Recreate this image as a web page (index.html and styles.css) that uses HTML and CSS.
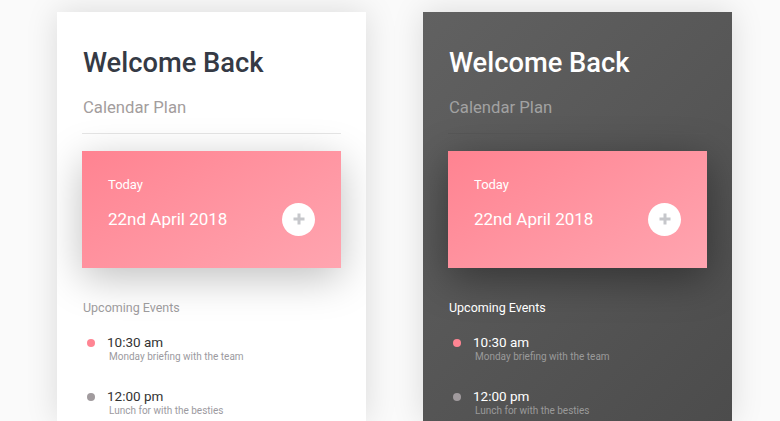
FILE: index.html
```html
<!DOCTYPE html>
<html lang="en">
<head>
<meta charset="utf-8">
<title>Calendar Plan</title>
<link rel="stylesheet" href="styles.css">
</head>
<body>
<div class="page">
  <section class="card light">
    <h1 class="title">Welcome Back</h1>
    <p class="subtitle">Calendar Plan</p>
    <hr class="divider">
    <div class="today">
      <div class="today-label">Today</div>
      <div class="today-row">
        <span class="today-date">22nd April 2018</span>
        <span class="add-btn"><svg width="12" height="12" viewBox="0 0 12 12"><path d="M6 0.5V11.5M0.5 6H11.5" stroke="#c6c7cb" stroke-width="3"/></svg></span>
      </div>
    </div>
    <h2 class="section-title">Upcoming Events</h2>
    <ul class="events">
      <li class="event">
        <div class="event-head"><span class="dot pink"></span><span class="event-time">10:30 am</span></div>
        <div class="event-desc">Monday briefing with the team</div>
      </li>
      <li class="event">
        <div class="event-head"><span class="dot grey"></span><span class="event-time">12:00 pm</span></div>
        <div class="event-desc">Lunch for with the besties</div>
      </li>
    </ul>
  </section>
  <section class="card dark">
    <h1 class="title">Welcome Back</h1>
    <p class="subtitle">Calendar Plan</p>
    <hr class="divider">
    <div class="today">
      <div class="today-label">Today</div>
      <div class="today-row">
        <span class="today-date">22nd April 2018</span>
        <span class="add-btn"><svg width="12" height="12" viewBox="0 0 12 12"><path d="M6 0.5V11.5M0.5 6H11.5" stroke="#c6c7cb" stroke-width="3"/></svg></span>
      </div>
    </div>
    <h2 class="section-title">Upcoming Events</h2>
    <ul class="events">
      <li class="event">
        <div class="event-head"><span class="dot pink"></span><span class="event-time">10:30 am</span></div>
        <div class="event-desc">Monday briefing with the team</div>
      </li>
      <li class="event">
        <div class="event-head"><span class="dot grey"></span><span class="event-time">12:00 pm</span></div>
        <div class="event-desc">Lunch for with the besties</div>
      </li>
    </ul>
  </section>
</div>
</body>
</html>
```
FILE: styles.css
```css
html, body {
  margin: 0;
  padding: 0;
}
body {
  background: #fafafa;
  font-family: Roboto, "Liberation Sans", sans-serif;
  width: 780px;
  height: 421px;
  overflow: hidden;
}
.page {
  display: flex;
  gap: 57px;
  padding: 12px 0 0 57px;
}
.card {
  width: 309px;
  height: 409px;
  box-sizing: border-box;
  padding: 35px 25px 0 26px;
  box-shadow: 0 0 30px rgba(0, 0, 0, 0.13);
  flex: none;
  overflow: hidden;
}
.light {
  background: #ffffff;
}
.dark {
  background: linear-gradient(135deg, #616161 0%, #4c4c4c 100%);
}
.title {
  margin: 0;
  font-size: 27.3px;
  line-height: 32px;
  font-weight: 500;
  color: #353a45;
}
.dark .title { color: #ffffff; }
.subtitle {
  margin: 19px 0 0;
  font-size: 16.7px;
  line-height: 20px;
  color: #a39d9d;
}
.dark .subtitle { color: #a2a2a2; }
.divider {
  margin: 15px 0 0 -1px;
  border: 0;
  height: 1px;
  background: #e6e6e6;
}
.dark .divider { background: #575757; }
.today {
  margin: 17px 0 0 -1px;
  height: 117px;
  box-sizing: border-box;
  padding: 26px 26px 0 26px;
  background: linear-gradient(150deg, #ff8391 0%, #ffa5b0 100%);
  box-shadow: 0 10px 40px rgba(0, 0, 0, 0.25);
  color: #ffffff;
}
.dark .today {
  box-shadow: 0 10px 40px rgba(0, 0, 0, 0.4);
}
.today-label {
  font-size: 13px;
  line-height: 16px;
}
.today-row {
  margin-top: 16px;
  display: flex;
  align-items: center;
  justify-content: space-between;
  height: 20px;
}
.today-date {
  font-size: 17px;
  line-height: 20px;
}
.add-btn {
  width: 33px;
  height: 33px;
  border-radius: 50%;
  background: #ffffff;
  display: flex;
  align-items: center;
  justify-content: center;
}
.section-title {
  margin: 32px 0 0;
  font-size: 12.5px;
  line-height: 15px;
  font-weight: 400;
  color: #9c9a9c;
}
.dark .section-title { color: #ffffff; }
.events {
  list-style: none;
  margin: 20px 0 0;
  padding: 0;
  display: flex;
  flex-direction: column;
  gap: 27px;
}
.event-head {
  display: flex;
  align-items: center;
  gap: 12px;
}
.dot {
  width: 8px;
  height: 8px;
  border-radius: 50%;
  margin-left: 4px;
}
.dot.pink { background: #ff8593; }
.dot.grey { background: #a19b9e; }
.event-time {
  font-size: 13.5px;
  line-height: 15px;
  color: #333333;
}
.dark .event-time { color: #ffffff; }
.event-desc {
  margin: 1px 0 0 26px;
  font-size: 10px;
  line-height: 11px;
  color: #9c9aa0;
}
.dark .event-desc { color: #9a9a9a; }
```
